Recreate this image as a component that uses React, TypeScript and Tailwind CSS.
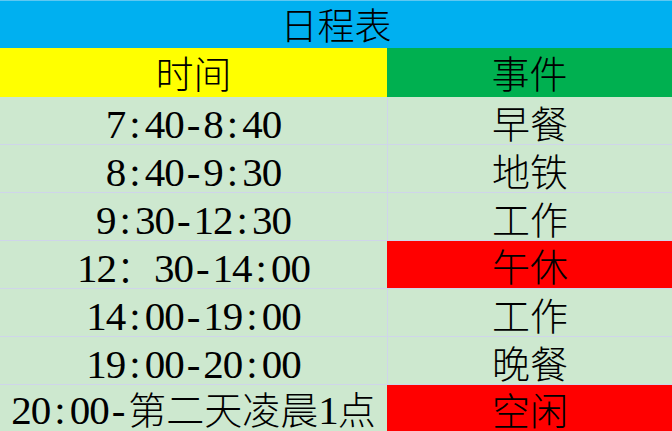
import { Fragment } from 'react';

interface ScheduleRow {
  time: string;
  event: string;
  busy?: boolean;
}

const rows: ScheduleRow[] = [
  { time: '7:40-8:40', event: '早餐' },
  { time: '8:40-9:30', event: '地铁' },
  { time: '9:30-12:30', event: '工作' },
  { time: '12：30-14:00', event: '午休', busy: true },
  { time: '14:00-19:00', event: '工作' },
  { time: '19:00-20:00', event: '晚餐' },
  { time: '20:00-第二天凌晨1点', event: '空闲', busy: true }
];

// SimSun-style: ascii chars take a fixed half-width slot, centred
function CellText({ text }: { text: string }) {
  return (
    <span className="whitespace-nowrap">
      {Array.from(text).map((ch, i) =>
        ch.charCodeAt(0) < 128 ? (
          <span key={i} className="inline-block w-[19.5px] text-center text-[41px] leading-[32px]">
            {ch}
          </span>
        ) : (
          <Fragment key={i}>{ch}</Fragment>
        )
      )}
    </span>
  );
}

export default function App() {
  return (
    <div
      className="h-[431px] w-[672px] overflow-hidden bg-[#cde8cf] font-light text-black"
      style={{ fontFamily: '"Liberation Serif", "Noto Sans CJK SC", serif' }}
    >
      <div className="flex h-[48px] items-center justify-center border-t border-[#5ec8f2] bg-[#00b0f0] pt-[5px] text-[37px] leading-none">
        日程表
      </div>

      <div className="grid h-[49px] grid-cols-[387px_1fr] text-[38px] leading-none">
        <div className="flex items-center justify-center bg-[#ffff00] pt-[4px]">时间</div>
        <div className="flex items-center justify-center bg-[#00b050] pt-[4px]">事件</div>
      </div>

      {rows.map((row, i) => {
        const last = i === rows.length - 1;
        return (
          <div
            key={row.time}
            className={
              last
                ? 'grid h-[46px] grid-cols-[387px_1fr] text-[38px] leading-none'
                : 'grid h-[48px] grid-cols-[387px_1fr] border-b border-[#cfd5ea] text-[38px] leading-none'
            }
          >
            <div className={last ? 'flex items-center justify-center pt-[6px]' : 'flex items-center justify-center pt-[8px]'}>
              <CellText text={row.time} />
            </div>
            <div
              className={
                row.busy
                  ? 'flex items-center justify-center border-l border-[#ff0000] bg-[#ff0000] pt-[7px]'
                  : 'flex items-center justify-center border-l border-[#cfd5ea] pt-[8px]'
              }
            >
              {row.event}
            </div>
          </div>
        );
      })}
    </div>
  );
}
